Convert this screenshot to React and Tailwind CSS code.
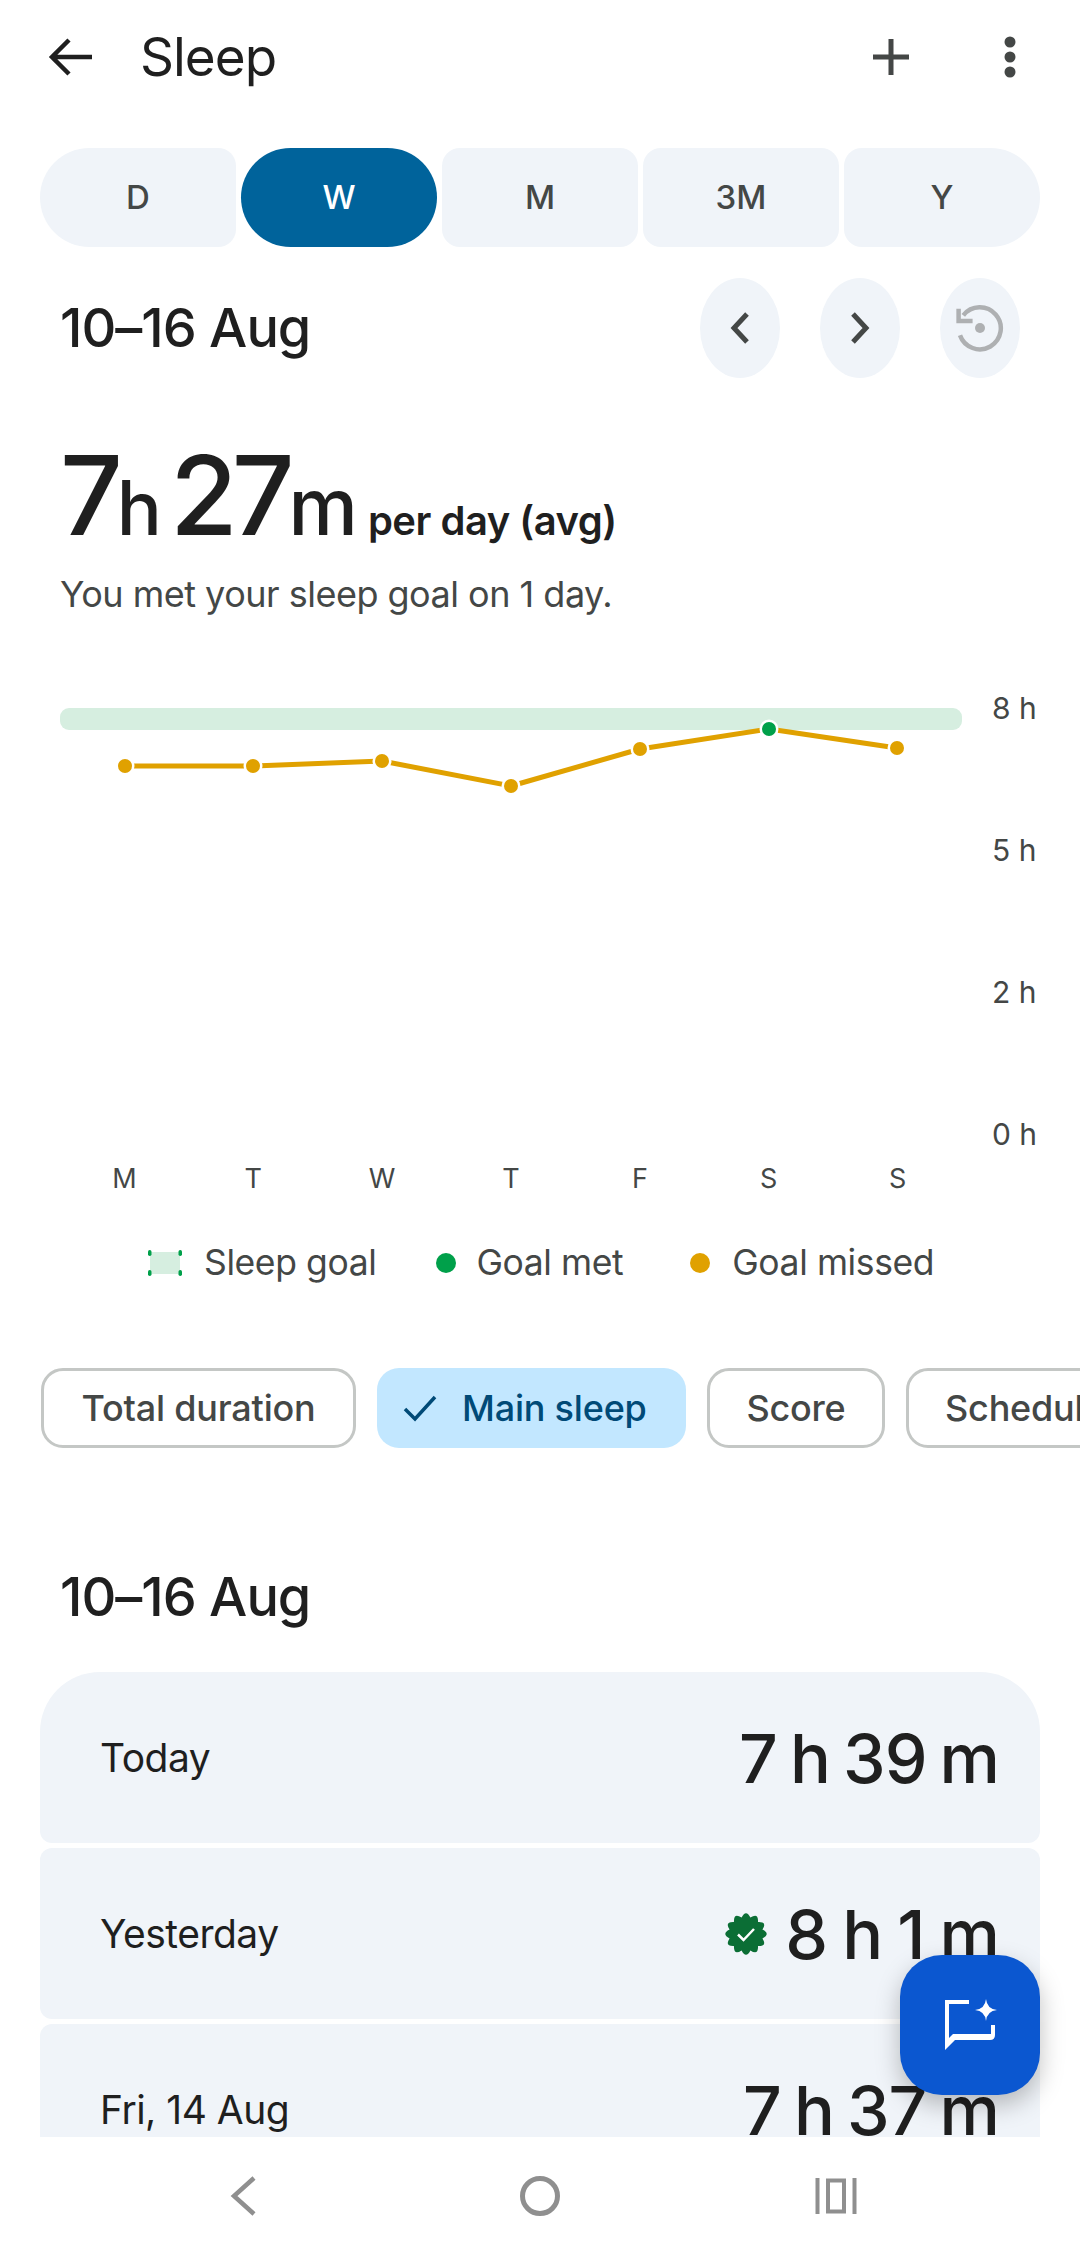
import React from 'react';

const days = ['M', 'T', 'W', 'T', 'F', 'S', 'S'];
const points = [
  [65, 76], [193, 76], [322, 71], [451, 96], [580, 59], [709, 39], [837, 58],
];
const axis = ['8 h', '5 h', '2 h', '0 h'];
const ranges = [
  { label: 'D', cls: 'bg-[#f0f4f9] text-[#444746] rounded-l-[50px] rounded-r-[18px]' },
  { label: 'W', cls: 'bg-[#00639b] text-white rounded-[50px]' },
  { label: 'M', cls: 'bg-[#f0f4f9] text-[#444746] rounded-[18px]' },
  { label: '3M', cls: 'bg-[#f0f4f9] text-[#444746] rounded-[18px]' },
  { label: 'Y', cls: 'bg-[#f0f4f9] text-[#444746] rounded-r-[50px] rounded-l-[18px]' },
];

// scalloped badge outline
const scallop = () => {
  const n = 12;
  const pt = (r, a) => `${(21 + r * Math.sin(a)).toFixed(2)} ${(21 - r * Math.cos(a)).toFixed(2)}`;
  let d = `M${pt(17, -Math.PI / n)}`;
  for (let i = 0; i < n; i++) {
    const a = (i * 2 * Math.PI) / n;
    d += `Q${pt(25, a)} ${pt(17, a + Math.PI / n)}`;
  }
  return d + 'Z';
};

const NavButton = ({ children }) => (
  <div className="w-[80px] h-[100px] rounded-[50%] bg-[#f0f4f9] flex items-center justify-center">{children}</div>
);

const Row = ({ label, value, badge, cls }) => (
  <div className={`h-[171px] shrink-0 bg-[#f0f4f9] flex items-center justify-between pl-[60px] pr-[41px] ${cls}`}>
    <span className="mt-[2px] text-[39px] text-[#1f1f1f] tracking-[-0.5px]">{label}</span>
    <div className="flex items-center gap-[18px]">
      {badge && (
        <svg width="42" height="42" viewBox="0 0 42 42">
          <path d={scallop()} fill="#0b6e35" />
          <path d="M13 21.5l5.5 5.5L29 16" fill="none" stroke="#fff" strokeWidth="2.5" />
        </svg>
      )}
      <span className={`text-[68px] leading-none font-medium text-[#1f1f1f] tracking-[-1px] ${badge ? '[word-spacing:-2px]' : '[word-spacing:-4px]'}`}>
        {value}
      </span>
    </div>
  </div>
);

export default function App() {
  return (
    <div className="relative w-[1080px] h-[2255px] overflow-hidden bg-white flex flex-col font-['Inter',sans-serif]">
      <div className="h-[2137px] overflow-hidden">
        {/* top bar */}
        <div className="h-[114px] flex items-center pl-[48px] pr-[64px]">
          <svg width="44" height="38" viewBox="0 0 44 38" fill="none" stroke="#1f1f1f" strokeWidth="4.5">
            <path d="M44 19H5M21 2L4 19l17 17" />
          </svg>
          <h1 className="ml-[48px] mt-[2px] text-[53px] text-[#1f1f1f] tracking-[-1px]">Sleep</h1>
          <div className="ml-auto flex items-center gap-[95px]">
            <svg width="36" height="36" viewBox="0 0 36 36" stroke="#444746" strokeWidth="5">
              <path d="M18 0v36M0 18h36" />
            </svg>
            <svg width="12" height="42" viewBox="0 0 12 42" fill="#444746">
              <circle cx="6" cy="6" r="5.5" />
              <circle cx="6" cy="21" r="5.5" />
              <circle cx="6" cy="36" r="5.5" />
            </svg>
          </div>
        </div>

        {/* range tabs */}
        <div className="mt-[34px] mx-[40px] h-[99px] flex gap-[5px]">
          {ranges.map((r) => (
            <div key={r.label} className={`flex-1 flex items-center justify-center text-[33px] font-medium ${r.cls}`}>
              {r.label}
            </div>
          ))}
        </div>

        {/* date + nav */}
        <div className="mt-[31px] h-[100px] flex items-center pl-[60px] pr-[60px]">
          <h2 className="mb-[2px] text-[54px] font-medium text-[#1f1f1f] tracking-[-1px]">10–16 Aug</h2>
          <div className="ml-auto flex gap-[40px]">
            <NavButton>
              <svg width="20" height="32" viewBox="0 0 20 32" fill="none" stroke="#444746" strokeWidth="5">
                <path d="M17 2L4 16l13 14" />
              </svg>
            </NavButton>
            <NavButton>
              <svg width="20" height="32" viewBox="0 0 20 32" fill="none" stroke="#444746" strokeWidth="5">
                <path d="M3 2l13 14L3 30" />
              </svg>
            </NavButton>
            <NavButton>
              <svg width="48" height="48" viewBox="0 0 48 48" fill="none" stroke="#aeb0b2" strokeWidth="4.5">
                <path d="M7.3 11.3A21 21 0 1 1 4 31.3" />
                <path d="M2.6 4.7V17h14" />
                <circle cx="24" cy="24" r="5" fill="#aeb0b2" stroke="none" />
              </svg>
            </NavButton>
          </div>
        </div>

        {/* average */}
        <div className="mt-[62px] h-[110px] pl-[60px] flex items-baseline text-[#1f1f1f]">
          <span className="text-[110px] leading-[110px] font-medium tracking-[-6px]">7</span>
          <span className="text-[75px] leading-[110px] font-medium">h</span>
          <span className="text-[110px] leading-[110px] font-medium tracking-[-6px] ml-[8px]">27</span>
          <span className="text-[78px] leading-[110px] font-medium">m</span>
          <span className="text-[40px] font-semibold ml-[10px] tracking-[-0.5px]">per day (avg)</span>
        </div>
        <p className="mt-[19px] h-[50px] pl-[60px] text-[36px] leading-[50px] text-[#444746] tracking-[-0.5px]">
          You met your sleep goal on 1 day.
        </p>

        {/* chart */}
        <div className="mt-[71px] h-[461px] flex pl-[60px]">
          <svg width="902" height="461" viewBox="0 0 902 461" className="shrink-0">
            <rect x="0" y="18" width="902" height="22" rx="9" fill="#d6eee0" />
            {points.slice(1).map((p, i) => (
              <line key={i} x1={points[i][0]} y1={points[i][1]} x2={p[0]} y2={p[1]} stroke="#e0a100" strokeWidth="5" />
            ))}
            {points.map((p, i) => (
              <circle key={i} cx={p[0]} cy={p[1]} r="9.5" fill="#fff" />
            ))}
            {points.map((p, i) => (
              <circle key={i} cx={p[0]} cy={p[1]} r="7" fill={i === 5 ? '#00a04a' : '#e0a100'} />
            ))}
          </svg>
          <div className="ml-[30px] pt-[1px] flex flex-col justify-between text-[30px] leading-[34px] text-[#444746]">
            {axis.map((a) => (
              <span key={a}>{a}</span>
            ))}
          </div>
        </div>
        <div className="mt-[11px] ml-[60px] w-[902px] h-[34px] flex text-[27px] leading-[34px] text-[#444746]">
          {days.map((d, i) => (
            <span key={i} className="flex-1 text-center">{d}</span>
          ))}
        </div>

        {/* legend */}
        <div className="mt-[47px] h-[40px] pl-[148px] flex items-center text-[35.5px] text-[#444746] tracking-[-0.4px]">
          <svg width="34" height="26" viewBox="0 0 34 26" className="shrink-0">
            <rect x="2" y="2" width="30" height="22" fill="#d6eee0" />
            <g fill="#00a04a">
              <rect x="0" y="0" width="3.5" height="6" rx="1.7" />
              <rect x="30.5" y="0" width="3.5" height="6" rx="1.7" />
              <rect x="0" y="20" width="3.5" height="6" rx="1.7" />
              <rect x="30.5" y="20" width="3.5" height="6" rx="1.7" />
            </g>
          </svg>
          <span className="ml-[22px]">Sleep goal</span>
          <span className="ml-[60px] w-[20px] h-[20px] rounded-full bg-[#00a04a]" />
          <span className="ml-[20px]">Goal met</span>
          <span className="ml-[67px] w-[20px] h-[20px] rounded-full bg-[#e0a100]" />
          <span className="ml-[22px]">Goal missed</span>
        </div>

        {/* filter chips */}
        <div className="mt-[85px] h-[80px] pl-[41px] flex gap-[21px] overflow-hidden text-[36px] font-medium tracking-[-0.2px]">
          <div className="shrink-0 w-[315px] flex items-center justify-center rounded-[22px] border-[3px] border-[#c4c7c5] text-[#444746]">
            Total duration
          </div>
          <div className="shrink-0 w-[309px] flex items-center pl-[26px] rounded-[22px] bg-[#c2e7ff] text-[#004a77]">
            <svg width="34" height="28" viewBox="0 0 34 28" fill="none" stroke="#004a77" strokeWidth="3.5">
              <path d="M2 15l10 10L32 3" />
            </svg>
            <span className="ml-[25px]">Main sleep</span>
          </div>
          <div className="shrink-0 w-[178px] flex items-center justify-center rounded-[22px] border-[3px] border-[#c4c7c5] text-[#444746]">
            Score
          </div>
          <div className="shrink-0 w-[250px] flex items-center pl-[36px] rounded-[22px] border-[3px] border-[#c4c7c5] text-[#444746]">
            Schedule
          </div>
        </div>

        <h2 className="mt-[124px] h-[50px] pl-[60px] text-[54px] leading-[50px] font-medium text-[#1f1f1f] tracking-[-1px]">
          10–16 Aug
        </h2>

        {/* daily rows */}
        <div className="mt-[50px] mx-[40px] flex flex-col gap-[5px]">
          <Row label="Today" value="7 h 39 m" cls="rounded-t-[60px] rounded-b-[12px]" />
          <Row label="Yesterday" value="8 h 1 m" badge cls="rounded-[12px]" />
          <Row label="Fri, 14 Aug" value="7 h 37 m" cls="rounded-[12px]" />
        </div>
      </div>

      {/* system nav */}
      <div className="flex-1 bg-white flex items-center pl-[229px]">
        <svg width="28" height="40" viewBox="0 0 28 40" fill="none" stroke="#8f8f8f" strokeWidth="4.5">
          <path d="M25 2L5 20l20 18" />
        </svg>
        <svg className="ml-[263px]" width="40" height="40" viewBox="0 0 40 40" fill="none" stroke="#8f8f8f" strokeWidth="5">
          <circle cx="20" cy="20" r="17.5" />
        </svg>
        <svg className="ml-[255px]" width="42" height="36" viewBox="0 0 42 36" fill="none" stroke="#8f8f8f" strokeWidth="4">
          <path d="M2.5 0v36M39.5 0v36" />
          <rect x="13" y="2.5" width="16" height="31" />
        </svg>
      </div>

      {/* assistant button */}
      <div className="absolute left-[900px] top-[1955px] w-[140px] h-[140px] rounded-[42px] bg-[#0b57d0] shadow-[0_10px_24px_rgba(0,0,0,0.25)]">
        <svg width="140" height="140" viewBox="0 0 140 140" fill="#fff">
          <path d="M45 45H69V49H49V83L53 79H91V70H95V80Q95 85 90 85H55L45 95Z" />
          <path d="M86 44Q87 54 97 55Q87 56 86 66Q85 56 75 55Q85 54 86 44Z" />
        </svg>
      </div>
    </div>
  );
}
